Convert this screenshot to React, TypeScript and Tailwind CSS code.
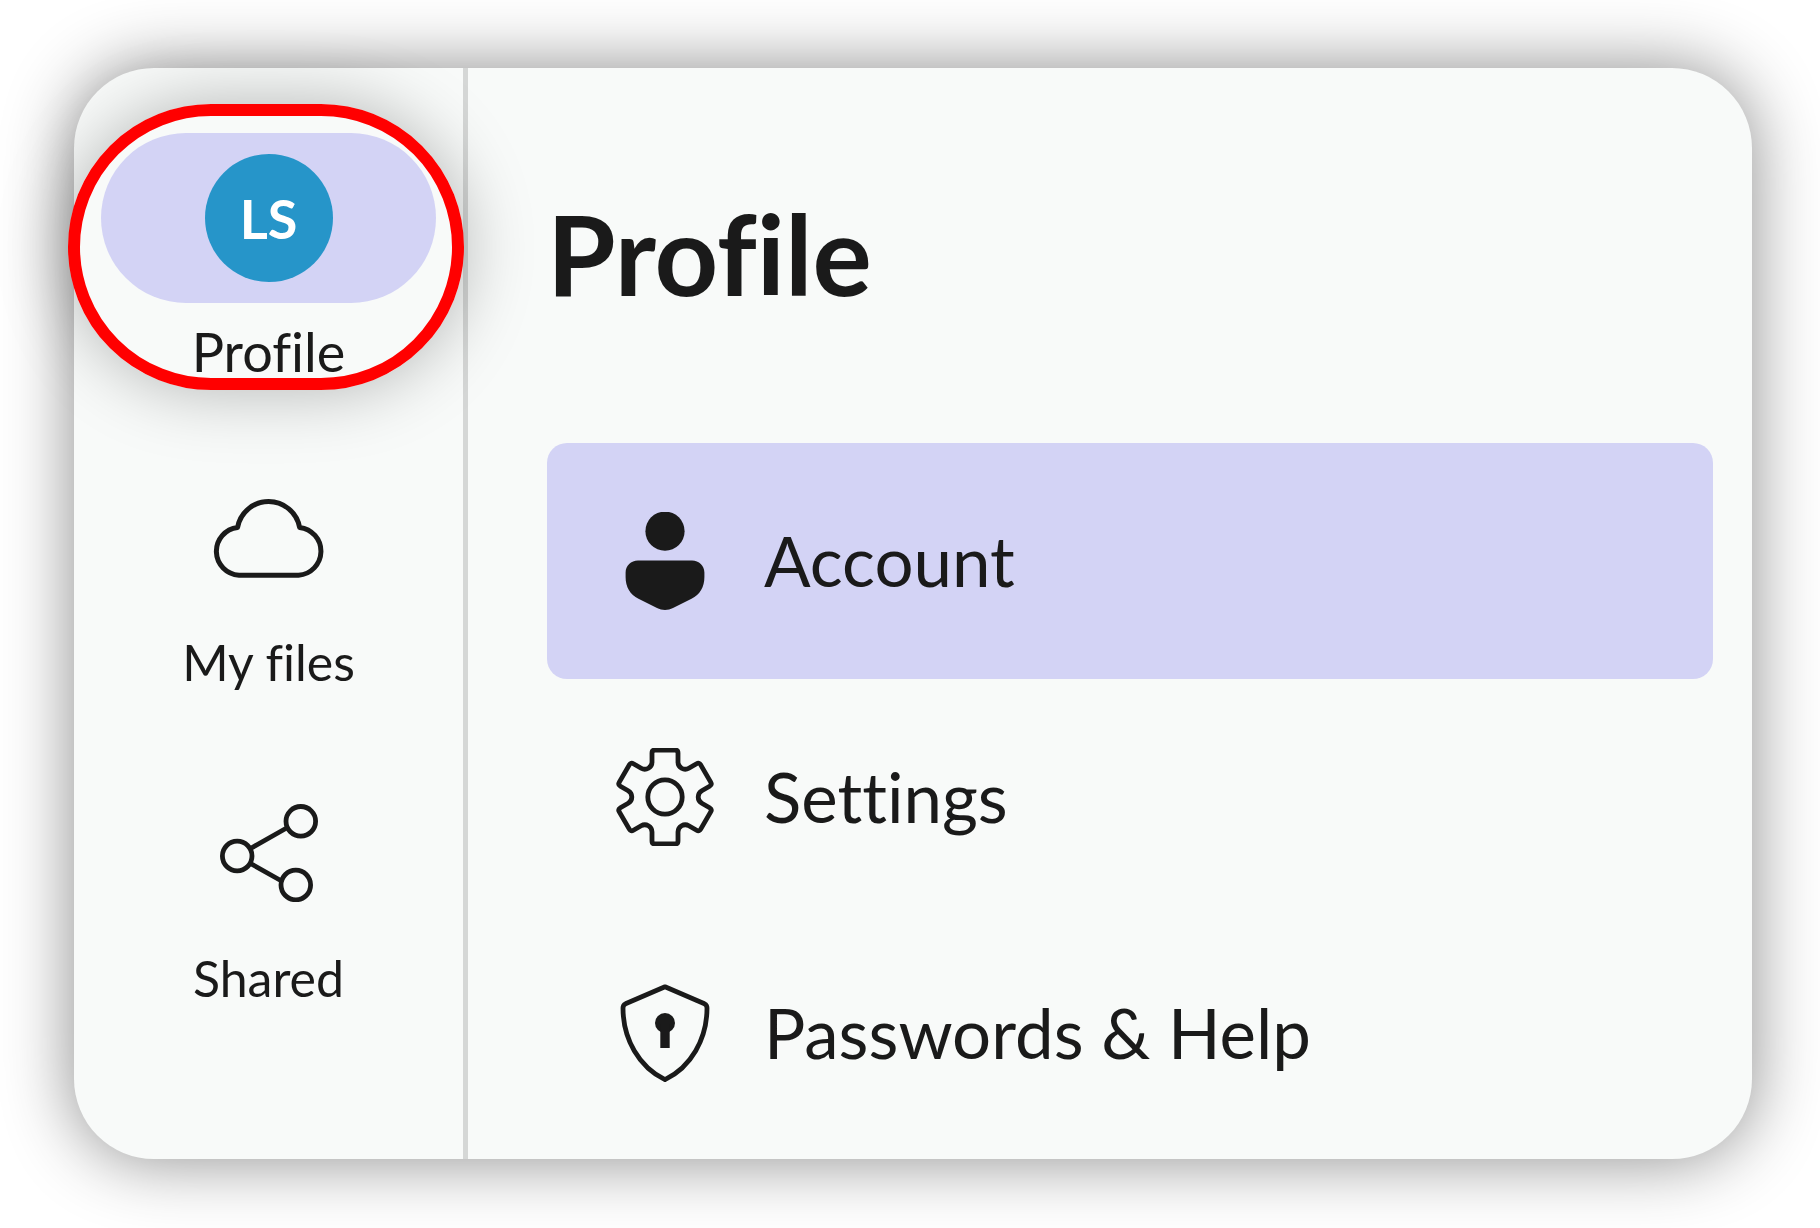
import type { ReactNode } from "react";

// One tooth of the cog plus the notch after it, repeated every 60 degrees
function cogPath() {
  const point = (x: number, y: number, deg: number) => {
    const a = (deg * Math.PI) / 180;
    const px = 49 + x * Math.cos(a) - y * Math.sin(a);
    const py = 49 + x * Math.sin(a) + y * Math.cos(a);
    return `${px.toFixed(2)} ${py.toFixed(2)}`;
  };
  let d = `M${point(-13, -35, 0)}`;
  for (let deg = 0; deg < 360; deg += 60) {
    d += `L${point(-13, -44, deg)}Q${point(-13, -47, deg)} ${point(-10, -47, deg)}`;
    d += `L${point(10, -47, deg)}Q${point(13, -47, deg)} ${point(13, -44, deg)}`;
    d += `L${point(13, -35, deg)}A7.2 7.2 0 0 0 ${point(-13, -35, deg + 60)}`;
  }
  return d + "Z";
}

function CloudIcon() {
  return (
    <svg viewBox="0 0 112 98" className="w-28 h-[98px]" fill="none" stroke="currentColor" strokeWidth="5" strokeLinejoin="round" aria-hidden="true">
      <path d="M25.6 39.4A31.5 31.5 0 0 1 87.6 39.4A24 24 0 0 1 86.5 87.2H27A24 24 0 0 1 25.6 39.4Z" />
    </svg>
  );
}

function ShareIcon() {
  return (
    <svg viewBox="0 0 98 98" className="size-[98px]" fill="none" stroke="currentColor" strokeWidth="4.8" aria-hidden="true">
      <circle cx="80.8" cy="17.3" r="14.8" />
      <circle cx="17.2" cy="52" r="14.8" />
      <circle cx="75.8" cy="81" r="14.8" />
      <path d="M30.5 44.5L67.5 23.5M30.5 59.5L62.5 77.5" />
    </svg>
  );
}

function AccountIcon() {
  return (
    <svg viewBox="0 0 98 98" className="size-[98px] shrink-0" fill="currentColor" aria-hidden="true">
      <circle cx="49" cy="19.2" r="19.6" />
      <path d="M22 48.5H76C83 48.5 88.4 53.5 88.4 60.5V65C88.4 75 84 82.5 75.5 86.8L57 96C52 98.6 46 98.6 41 96L22.5 86.8C14 82.5 9.6 75 9.6 65V60.5C9.6 53.5 15 48.5 22 48.5Z" />
    </svg>
  );
}

function SettingsIcon() {
  return (
    <svg viewBox="0 0 98 98" className="size-[98px] shrink-0" fill="none" stroke="currentColor" strokeWidth="4.8" strokeLinejoin="round" aria-hidden="true">
      <path d={cogPath()} />
      <circle cx="49" cy="49" r="17.2" />
    </svg>
  );
}

function ShieldIcon() {
  return (
    <svg viewBox="0 0 98 98" className="size-[98px] shrink-0" fill="none" aria-hidden="true">
      <path
        d="M49 2.8L88.5 19.8Q91 21 91 24C91 55 75 83 49 95.6C23 83 7 55 7 24Q7 21 9.5 19.8Z"
        stroke="currentColor"
        strokeWidth="4.8"
        strokeLinejoin="round"
      />
      <circle cx="49" cy="39" r="10" fill="currentColor" />
      <path d="M44.3 40H53.7V64H44.3Z" fill="currentColor" />
    </svg>
  );
}

const menu: { label: string; icon: ReactNode; active?: boolean }[] = [
  { label: "Account", icon: <AccountIcon />, active: true },
  { label: "Settings", icon: <SettingsIcon /> },
  { label: "Passwords & Help", icon: <ShieldIcon /> },
];

export default function App() {
  return (
    <div className="min-h-screen bg-white py-[68px] pl-[74px] pr-[68px] font-['Lato',sans-serif] text-[#1a1a1a] [font-variant-ligatures:none]">
      <div className="flex rounded-[80px] bg-[#f8faf9] shadow-[0_0_70px_rgba(0,0,0,0.46)]">
        {/* Sidebar */}
        <nav className="flex w-[394px] shrink-0 flex-col items-center border-r-5 border-[#d5d7d6] pt-[65px]">
          <a href="#" className="relative mb-[107px] flex flex-col items-center gap-5">
            <span className="flex h-[170px] w-[335px] items-center justify-center rounded-full bg-[#d3d3f5]">
              <span className="flex size-32 items-center justify-center rounded-full bg-[#2695c9] text-[54px] font-bold text-white">
                LS
              </span>
            </span>
            <span className="text-[54px] leading-[58px]">Profile</span>
            {/* Highlight ring */}
            <span className="absolute -top-[29px] -right-7 -bottom-[9px] -left-[33px] rounded-full border-12 border-[#ff0000] shadow-[0_0_70px_rgba(0,0,0,0.28)]" />
          </a>
          <a href="#" className="mb-28 flex flex-col items-center gap-[46px]">
            <CloudIcon />
            <span className="text-[50px] leading-[60px]">My files</span>
          </a>
          <a href="#" className="flex flex-col items-center gap-[46px]">
            <ShareIcon />
            <span className="text-[50px] leading-[60px]">Shared</span>
          </a>
        </nav>

        {/* Content */}
        <main className="min-w-0 flex-1 pt-[120px] pr-[39px] pb-2 pl-[79px]">
          <h1 className="mb-[125px] text-[111px] leading-[130px] font-bold">Profile</h1>
          <ul>
            {menu.map(({ label, icon, active }) => (
              <li key={label}>
                <a
                  href="#"
                  className={`flex h-[236px] items-center gap-[50px] rounded-[20px] pl-[69px] ${active ? "bg-[#d3d3f5]" : ""}`}
                >
                  {icon}
                  <span className="text-[69px] leading-[82px]">{label}</span>
                </a>
              </li>
            ))}
          </ul>
        </main>
      </div>
    </div>
  );
}
